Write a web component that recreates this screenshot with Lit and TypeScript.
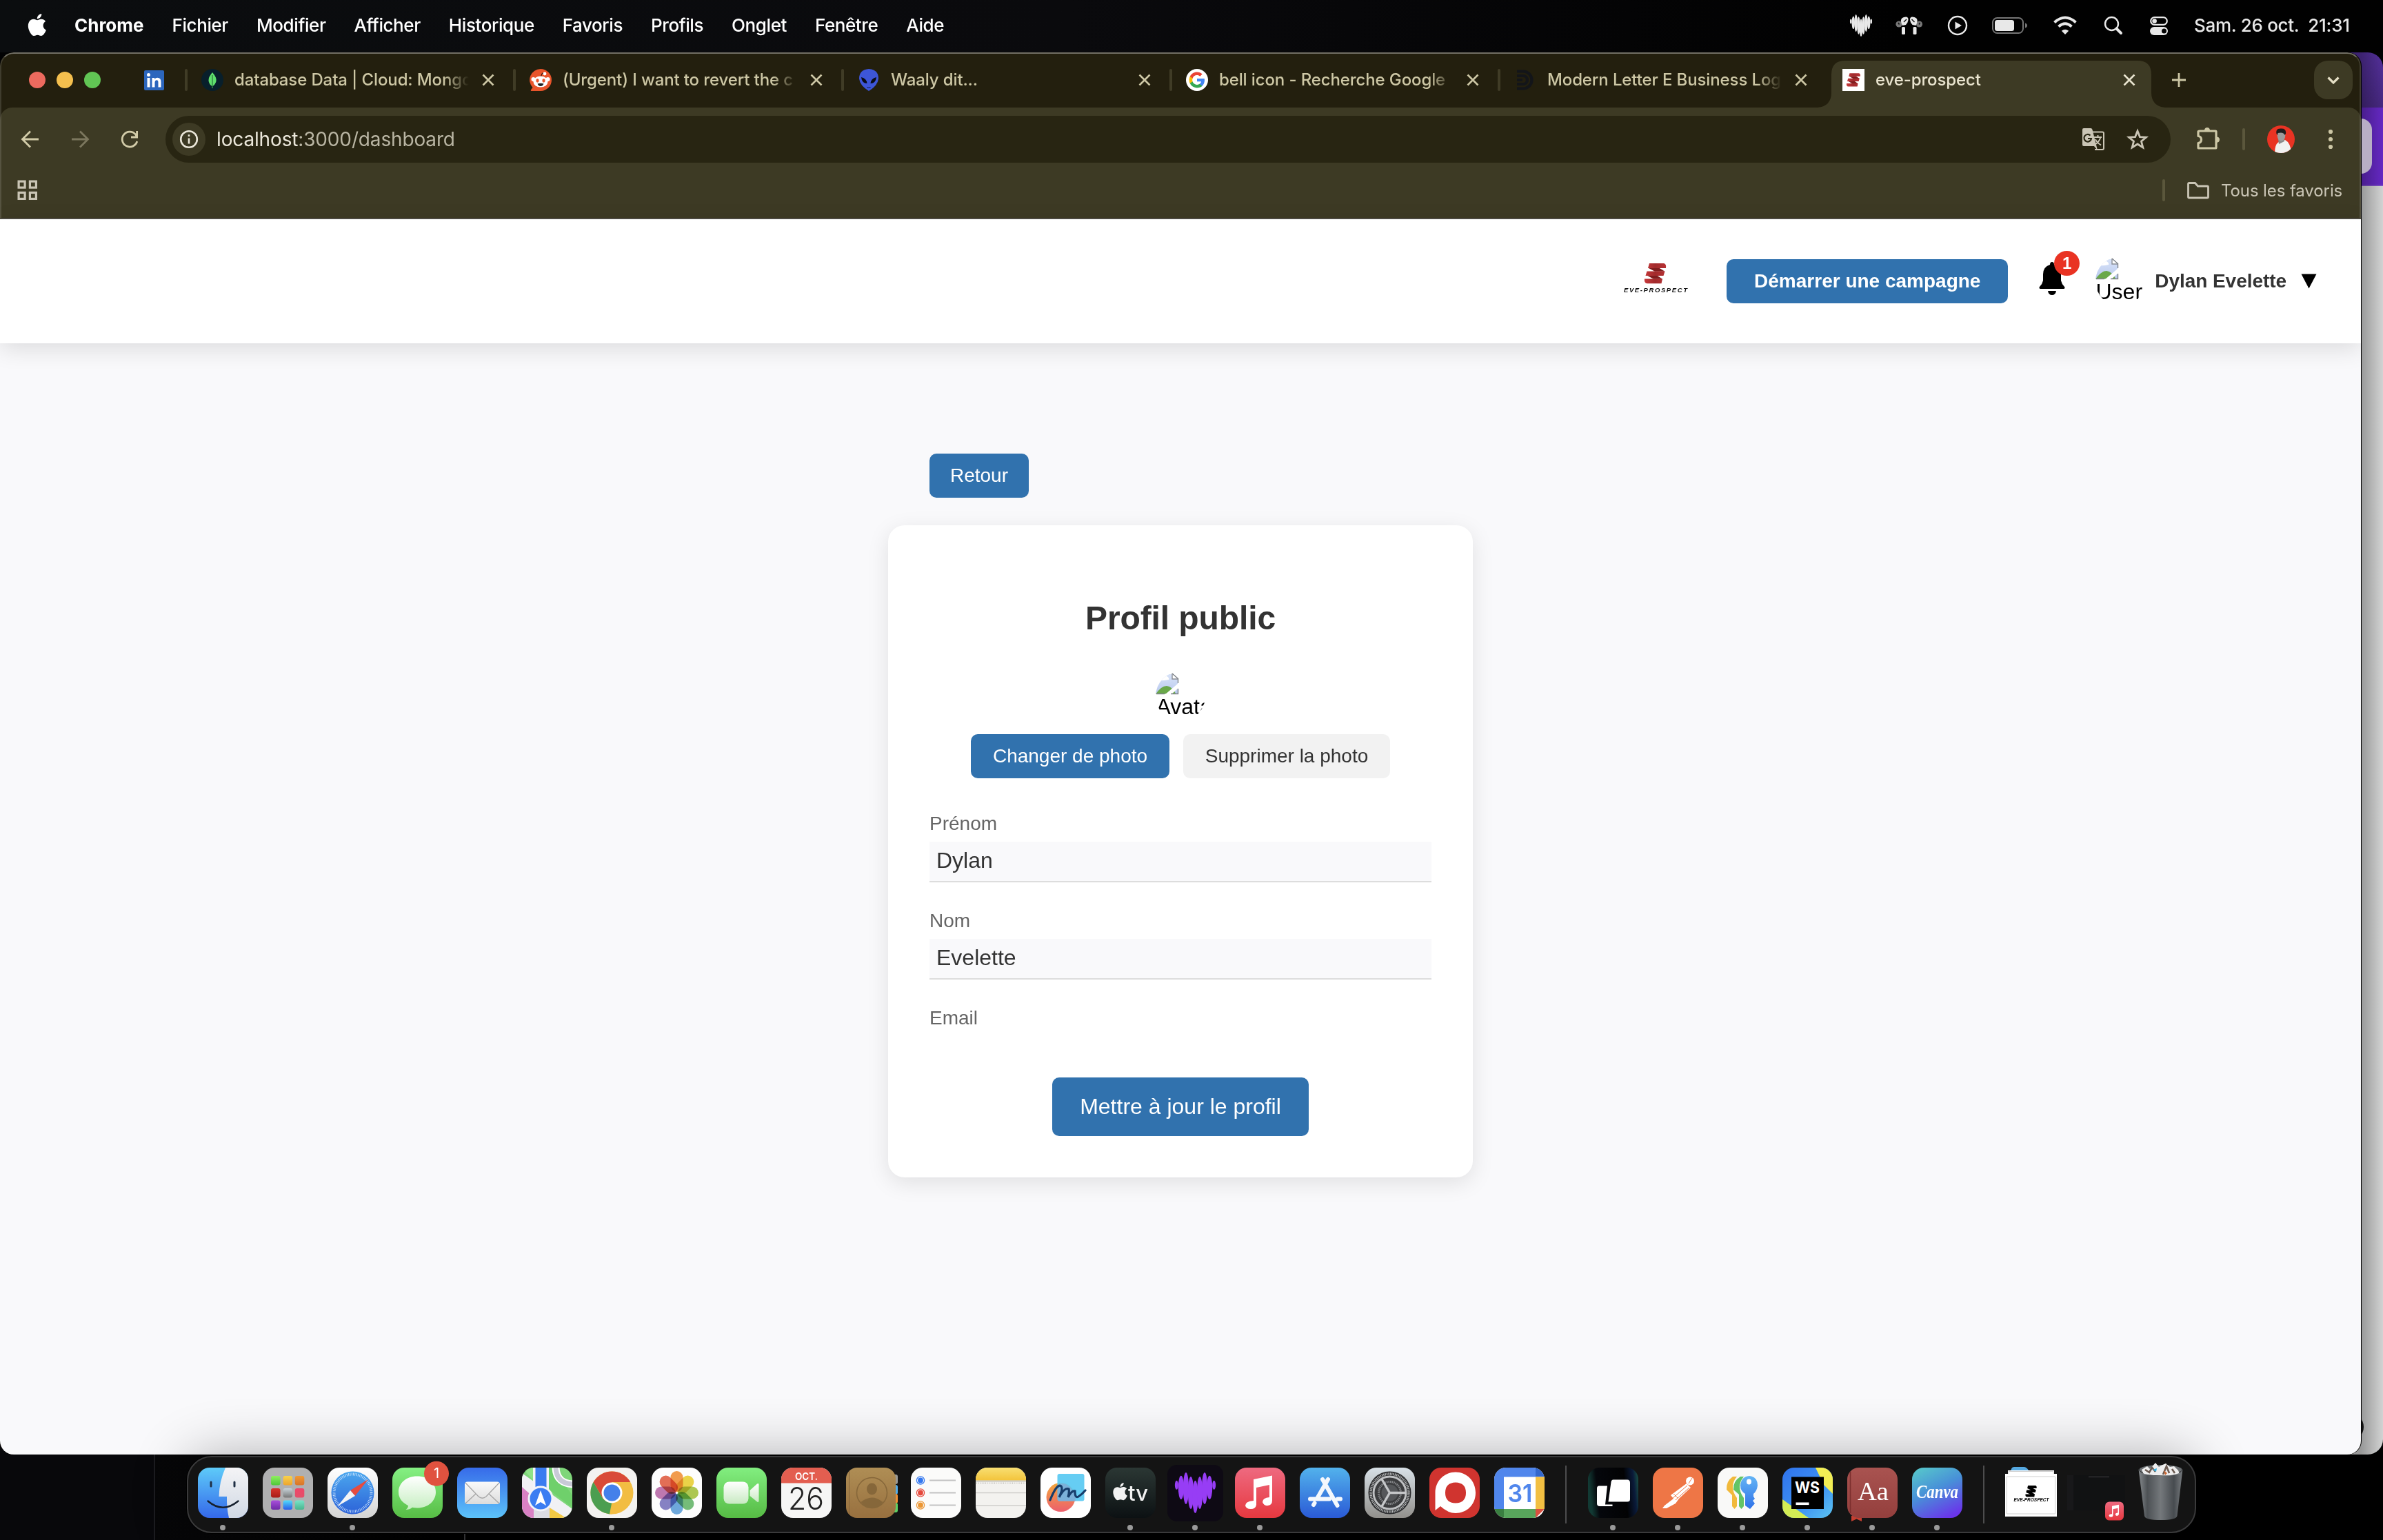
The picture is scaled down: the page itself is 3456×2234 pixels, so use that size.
import { LitElement, html, svg, css } from "lit";
import { customElement } from "lit/decorators.js";

/* ---------- shared drawings ---------- */

const APPLE =
  "M12.152 6.896c-.948 0-2.415-1.078-3.96-1.04-2.04.027-3.91 1.183-4.961 3.014-2.117 3.675-.546 9.103 1.519 12.09 1.013 1.454 2.208 3.09 3.792 3.039 1.52-.065 2.09-.987 3.935-.987 1.831 0 2.35.987 3.96.948 1.637-.026 2.676-1.48 3.676-2.948 1.156-1.688 1.636-3.325 1.662-3.415-.039-.013-3.182-1.221-3.22-4.857-.026-3.04 2.48-4.494 2.597-4.559-1.429-2.09-3.623-2.324-4.39-2.376-2-.156-3.675 1.09-4.61 1.09zM15.53 3.83c.843-1.012 1.4-2.427 1.245-3.83-1.207.052-2.662.805-3.532 1.818-.78.896-1.454 2.338-1.273 3.714 1.338.104 2.715-.688 3.559-1.701";

/* Sound-wave heart: vertical capsules [x, top, bottom] on a 100 unit grid */
const HEART_BARS: number[][] = [
  [4, 20, 42], [15, 8, 66], [27, 0, 78], [39, 10, 90], [50, 20, 100],
  [61, 10, 90], [73, 0, 78], [85, 8, 66], [96, 20, 42],
];
const heart = (w: number) =>
  HEART_BARS.map(([x, a, b]) => svg`<ellipse cx=${x} cy=${(a + b) / 2} rx=${x < 5 || x > 95 ? w * 0.6 : w} ry=${(b - a) / 2}></ellipse>`);

const ribbon = (id: string) => svg`
  <linearGradient id=${id} x1="0" x2="1"><stop offset="0" stop-color="#c8393b"/><stop offset=".5" stop-color="#a12a2c"/><stop offset="1" stop-color="#b83234"/></linearGradient>
  <path fill="#7f1d1e" d="M5 6.500H21L29.500 11.800H15ZM3.500 17.500H18L26 22.800H13Z"/>
  <path fill="url(#${id})" d="M7 0H28Q32 1 31 7H5ZM3.500 11.500H29.500L27.500 18H1.500ZM0 22.500H26L24.500 29.300H4Q-1 29 0 22.500Z"/>`;

const brokenImage = (label: string) => html`
  <svg width="72" height="72" viewBox="0 0 72 72" role="img">
    <defs>
      <clipPath id="round"><circle cx="36" cy="36" r="36"/></clipPath>
      <linearGradient id="sky" x1="0" y1="0" x2="0" y2="1"><stop offset="0" stop-color="#d8e3f8"/><stop offset="1" stop-color="#b9c9ee"/></linearGradient>
    </defs>
    <g clip-path="url(#round)">
      <g transform="translate(-1 1)">
        <path d="M1 3H25L33 11V31H1Z" fill="url(#sky)"/>
        <path d="M1 32Q9 20 17 20Q25 21 30 31Z" fill="#6aa84a"/>
        <path d="M12 3Q15 2 17 6Q21 8 20 11Q10 13 4 12V0H12Z" fill="#fff"/>
        <path d="M14 33L34 16V23L23 33Z" fill="#fff"/>
        <path d="M25 2V10H34" fill="#fff" stroke="#8b8f96" stroke-width="1.400"/>
        <path d="M25 2L34 10M33.500 9V16M33.500 24V31.500H23M2 31.500H14" fill="none" stroke="#7d8288" stroke-width="1.400"/>
      </g>
      <text x="0.500" y="62" font-family="'Liberation Sans',Arial,sans-serif" font-size="32" fill="#000">${label}</text>
    </g>
  </svg>`;

/* ---------- menu bar ---------- */

@customElement("menu-bar")
class MenuBar extends LitElement {
  static styles = css`
    :host { display: flex; align-items: center; padding: 0 36px 3px 36px; box-sizing: border-box; height: 76px;
      background: linear-gradient(90deg, #0b0d0f, #0a0a0d 45%, #010101 80%); color: #fff;
      font: 500 26px Inter, "Liberation Sans", sans-serif; }
    .logo { margin-right: 36px; flex: none; }
    .menus { display: flex; gap: 41px; letter-spacing: -0.42px; white-space: pre; }
    .app { font-weight: 700; letter-spacing: 0; }
    .status { display: flex; align-items: center; gap: 30px; margin-left: auto; color: #e8e8e8; }
    .status svg { flex: none; }
    .clock { margin-left: -3px; white-space: pre; letter-spacing: -0.3px; width: 238px; }
  `;
  render() {
    const items = ["Fichier", "Modifier", "Afficher", "Historique", "Favoris", "Profils", "Onglet", "Fenêtre", "Aide"];
    const bud = svg`<circle cx="5" cy="18" r="4.600" fill="#777"/><path d="M10 20Q5 10 12 8Q19 6 18.500 12Q18 16 15 19Z" fill="#e8e8e8"/><rect x="9" y="22" width="5" height="11" rx="1.500" fill="#e8e8e8"/><path d="M12 15L16 11" stroke="#111" stroke-width="1.500"/><path d="M4 16L5.500 18.500" stroke="#111" stroke-width="1.500"/>`;
    return html`
      <svg class="logo" width="36" height="34" viewBox="-1.4 0 27 25.5" fill="#fff"><path d=${APPLE}/></svg>
      <div class="menus"><span class="app">Chrome</span>${items.map((i) => html`<span>${i}</span>`)}</div>
      <div class="status">
        <svg width="40" height="34" viewBox="0 0 40 34" fill="#e8e8e8"><g transform="translate(4 1) scale(.32)">${heart(7)}</g></svg>
        <svg width="40" height="40" viewBox="0 0 40 40"><g>${bud}</g><g transform="matrix(-1 0 0 1 39.500 0)">${bud}</g></svg>
        <svg width="40" height="40" viewBox="0 0 40 40"><circle cx="20" cy="20" r="13" fill="none" stroke="#e8e8e8" stroke-width="2.400"/><path d="M16.500 14.500L26 20L16.500 25.500Z" fill="#e8e8e8"/></svg>
        <svg width="56" height="40" viewBox="0 0 56 40"><rect x="1" y="9" width="44" height="22" rx="6.500" fill="none" stroke="#757575" stroke-width="2"/><rect x="4" y="12" width="28" height="16" rx="3.500" fill="#e8e8e8"/><path d="M48 16.500Q51 17.500 51 20T48 23.500Z" fill="#757575"/></svg>
        <svg width="40" height="40" viewBox="0 0 40 40" fill="none" stroke="#e8e8e8" stroke-width="4"><path d="M4.500 15.500Q20 1.500 35.500 15.500"/><path d="M10.500 21.500Q20 13 29.500 21.500"/><path d="M20 33L14.800 27.800Q20 23.500 25.200 27.800Z" fill="#e8e8e8" stroke="none"/></svg>
        <svg width="40" height="40" viewBox="0 0 40 40" fill="none" stroke="#e8e8e8"><circle cx="17.500" cy="17.500" r="9.500" stroke-width="2.400"/><path d="M24.500 24.500L31 31" stroke-width="4" stroke-linecap="round"/></svg>
        <svg width="40" height="40" viewBox="0 0 40 40"><rect x="4.200" y="8.200" width="23.600" height="10.600" rx="5.300" fill="none" stroke="#e8e8e8" stroke-width="2.200"/><circle cx="9.600" cy="13.500" r="3.300" fill="#e8e8e8"/><rect x="3" y="22" width="26" height="12" rx="6" fill="#e8e8e8"/><circle cx="23.500" cy="28" r="3.500" fill="#050505"/></svg>
        <span class="clock">Sam. 26 oct.  21:31</span>
      </div>`;
  }
}

/* ---------- profile page ---------- */

@customElement("profile-page")
class ProfilePage extends LitElement {
  static styles = css`
    :host { display: flex; flex-direction: column; flex: 1; min-height: 0; background: #f9f9fb;
      font-family: "Liberation Sans", Arial, sans-serif; font-size: 28px; color: #333; }
    header { display: flex; align-items: center; justify-content: flex-end; height: 180px; flex: none; background: #fff;
      padding-right: 64px; box-shadow: 0 8px 32px rgba(0, 0, 0, 0.12); position: relative; box-sizing: border-box; }
    .brand { margin-right: 56px; }
    .btn { display: inline-flex; align-items: center; justify-content: center; height: 64px; border: 0; border-radius: 10px;
      background: #3172ae; color: #fff; font: inherit; padding: 0; box-sizing: border-box; white-space: nowrap; }
    .cta { width: 408px; font-weight: 700; }
    .bell { position: relative; width: 38px; height: 48px; margin: -8px 44px 0 45px; }
    .count { position: absolute; left: 22px; top: -16px; width: 37px; height: 36px; border-radius: 50%; background: #e93323;
      color: #fff; font: 700 24px/36px "Liberation Sans", Arial, sans-serif; text-align: center; }
    .name { font-weight: 700; margin: 0 20px 0 14px; letter-spacing: -0.05px; }
    header svg { display: block; flex: none; }
    main { display: flex; flex-direction: column; align-items: center; padding-top: 160px; }
    .back { width: 848px; padding-left: 60px; box-sizing: border-box; margin-bottom: 40px; display: flex; }
    .back .btn { width: 144px; }
    .card { width: 848px; height: 946px; box-sizing: border-box; padding: 107px 60px 60px; background: #fff; border-radius: 24px;
      box-shadow: 0 8px 32px rgba(0, 0, 0, 0.1); display: flex; flex-direction: column; align-items: center; }
    h2 { margin: 0 0 49px; font-size: 48px; line-height: 56px; font-weight: 700; letter-spacing: -0.1px; }
    .card > svg { display: block; flex: none; }
    .photo { display: flex; gap: 20px; margin: 19px 0 50px; }
    .change { width: 288px; }
    .remove { width: 300px; background: #f2f2f2; color: #333; }
    .field { align-self: stretch; display: flex; flex-direction: column; gap: 10px; margin-bottom: 40px; }
    .field:last-of-type { margin-bottom: 70px; }
    label { line-height: 32px; color: #666; }
    .input { height: 59px; box-sizing: border-box; border-bottom: 2px solid #ddd; background: #f9f9fb; padding: 0 10px;
      font-size: 32px; line-height: 55px; }
    .save { width: 372px; height: 85px; font-size: 32px; }
  `;
  render() {
    return html`
      <header>
        <svg class="brand" width="94" height="52" viewBox="0 0 94 52">
          <g transform="translate(31 0)">${ribbon("rib")}</g>
          <text x="1" y="42.300" font-family="'Liberation Sans',sans-serif" font-style="italic" font-weight="700" font-size="9.500" textLength="92" lengthAdjust="spacing" fill="#111">EVE-PROSPECT</text>
        </svg>
        <button class="btn cta">Démarrer une campagne</button>
        <div class="bell">
          <svg width="38" height="48" viewBox="0 0 38 48"><path d="M19 0Q22 0 22 4Q32 7 32 18V27Q33 32 37 36Q38.500 38.500 36 39H2Q-.5 38.500 1 36Q5 32 6 27V18Q6 7 16 4Q16 0 19 0ZM13 42H25Q24 48 19 48T13 42Z"/></svg>
          <span class="count">1</span>
        </div>
        ${brokenImage("User")}
        <span class="name">Dylan Evelette</span>
        <svg width="24" height="22" viewBox="0 0 24 22"><path d="M1.500 .5H23.500L12.500 21.500Z"/></svg>
      </header>
      <main>
        <div class="back"><button class="btn">Retour</button></div>
        <section class="card">
          <h2>Profil public</h2>
          ${brokenImage("Avatar")}
          <div class="photo"><button class="btn change">Changer de photo</button><button class="btn remove">Supprimer la photo</button></div>
          <div class="field"><label>Prénom</label><div class="input">Dylan</div></div>
          <div class="field"><label>Nom</label><div class="input">Evelette</div></div>
          <div class="field"><label>Email</label></div>
          <button class="btn save">Mettre à jour le profil</button>
        </section>
      </main>`;
  }
}

/* ---------- browser window ---------- */

const G_PATHS = svg`
  <path fill="#4285f4" d="M22.560 12.250c0-.78-.07-1.530-.2-2.250H12v4.260h5.920c-.26 1.370-1.040 2.530-2.210 3.310v2.770h3.570c2.080-1.920 3.280-4.740 3.280-8.090z"/>
  <path fill="#34a853" d="M12 23c2.970 0 5.460-.98 7.280-2.660l-3.570-2.770c-.98.66-2.230 1.060-3.710 1.060-2.860 0-5.290-1.930-6.160-4.530H2.180v2.840C3.990 20.530 7.700 23 12 23z"/>
  <path fill="#fbbc05" d="M5.840 14.090c-.22-.66-.35-1.360-.35-2.090s.13-1.430.35-2.090V7.070H2.180C1.430 8.550 1 10.220 1 12s.43 3.450 1.180 4.930l2.850-2.220.81-.62z"/>
  <path fill="#ea4335" d="M12 5.380c1.620 0 3.060.56 4.210 1.640l3.150-3.150C17.450 2.090 14.970 1 12 1 7.700 1 3.990 3.470 2.180 7.070l3.660 2.840c.87-2.600 3.300-4.530 6.160-4.530z"/>`;

const ICO = {
  mongo: svg`<circle cx="16" cy="16" r="16" fill="#081f2b"/><path d="M16 5Q23 13 21.500 18T16.500 25V28H15.500V25Q11 22 10.500 17T16 5Z" fill="#5fe06d"/><path d="M16 9V27" stroke="#0c3b26" stroke-width=".8"/>`,
  reddit: svg`<path d="M16 0A16 16 0 1 1 16 32H2Q1 31 4.500 27A16 16 0 0 1 16 0Z" fill="#e9552b"/><path d="M16 12L18.500 6L22 7" fill="none" stroke="#111" stroke-width="1"/><circle cx="22" cy="7" r="2.400" fill="#fff"/><circle cx="5.500" cy="15" r="3" fill="#fff"/><circle cx="26.500" cy="15" r="3" fill="#fff"/><ellipse cx="16" cy="18.500" rx="10.500" ry="8" fill="#fff"/><ellipse cx="11.500" cy="17" rx="2.100" ry="2.700" fill="#e9552b"/><ellipse cx="20.500" cy="17" rx="2.100" ry="2.700" fill="#e9552b"/><path d="M11.500 21.500Q16 20 20.500 21.500Q19 25 16 25T11.500 21.500Z" fill="#222"/>`,
  alien: svg`<path d="M16 0Q30 1 30 14Q29 24 16 32Q3 24 2 14Q2 1 16 0Z" fill="#3d56d8"/><path d="M5 12Q13 14 13.500 21Q6 21 5 12ZM27 12Q19 14 18.500 21Q26 21 27 12Z" fill="#0a0c18"/><path d="M13.500 26.500Q16 28 18.500 26.500" fill="none" stroke="#15205e" stroke-width="1.200"/>`,
  google: svg`<circle cx="16" cy="16" r="16" fill="#fff"/><g transform="translate(3.500 3.500) scale(1.040)">${G_PATHS}</g>`,
  letter: svg`<g fill="none" stroke="#131519" stroke-width="4.200"><path d="M4 3.500H13A12.500 12.500 0 0 1 13 28.500H4"/><path d="M4 10H13A6 6 0 0 1 13 22H4"/><path d="M4 16H12"/></g>`,
  eve: svg`<rect width="32" height="32" fill="#fff"/><g transform="translate(6 6.200) scale(.640 .660)">${ribbon("tabrib")}</g>`,
};

@customElement("browser-window")
class BrowserWindow extends LitElement {
  static styles = css`
    :host { display: flex; flex-direction: column; overflow: hidden; border-radius: 20px; box-sizing: border-box;
      background: #231f0e; color: #cdc7a5; font-family: Inter, "Liberation Sans", sans-serif; }
    .edge { position: absolute; inset: 0 0 auto 0; height: 242px; border-radius: 20px 20px 0 0; box-sizing: border-box;
      border: 2px solid rgba(255, 255, 255, 0.13); border-top-color: rgba(255, 255, 255, 0.36); border-bottom: 2px solid #4b4840; }
    .strip { display: flex; height: 80px; flex: none; align-items: center; }
    .lights { display: flex; gap: 16px; margin-left: 42px; }
    .light { width: 24px; height: 24px; border-radius: 50%; }
    .red { background: #ec6a5e; } .amber { background: #f4bf4e; } .green { background: #61c554; }
    .pin { margin: 0 30px 0 63px; }
    svg { display: block; flex: none; }
    .tab { width: 476px; height: 80px; flex: none; display: flex; align-items: center; position: relative; box-sizing: border-box; }
    .bar { width: 4px; height: 32px; border-radius: 2px; background: #403c26; margin-right: 20px; flex: none; }
    .title { margin-left: 16px; width: 356px; white-space: nowrap; font-size: 24px; font-weight: 450; line-height: 32px;
      letter-spacing: -0.12px; -webkit-mask-image: linear-gradient(90deg, #000 304px, transparent 340px); }
    .tab svg, .title { position: relative; }
    .active { color: #e9e4cf; }
    .active .bar { background: none; }
    .tab .shape { position: absolute; left: -12px; top: 12px; width: 504px; height: 68px; }
    .plus { margin-left: 16px; }
    .more { margin: 0 12px 0 auto; width: 56px; height: 56px; border-radius: 20px; background: #3d3a24; }
    .tools { display: flex; align-items: center; height: 92px; padding: 0 24px; background: #3d3a24; flex: none; border-radius: 18px 18px 0 0; gap: 32px; }
    .omni { flex: none; width: 2908px; height: 68px; border-radius: 34px; background: #282512; display: flex; align-items: center;
      padding: 0 28px 0 10px; box-sizing: border-box; font-size: 28px; margin-right: 2px; }
    .info { width: 48px; height: 48px; border-radius: 50%; background: #3d3a24; margin-right: 16px; flex: none; }
    .url { color: #b9b5a3; letter-spacing: -0.15px; margin-right: auto; font-weight: 430; }
    .host { color: #ebe7da; }
    .translate { margin-right: 24px; }
    .sep { width: 4px; height: 32px; border-radius: 2px; background: #5b573c; flex: none; margin: 0 0 0 -2px; }
    .marks { display: flex; align-items: center; height: 70px; padding: 0 30px 14px 20px; box-sizing: border-box; background: #3d3a24;
      font-size: 24px; color: #cac5b5; flex: none; }
    .marks .sep { margin: 0 32px 0 auto; }
    .label { margin-left: 17px; letter-spacing: -0.1px; width: 173px; white-space: nowrap; font-weight: 430; }
  `;
  tab(icon: unknown, title: string, active = false) {
    return html`<div class="tab ${active ? "active" : ""}">
      ${active
        ? html`<svg class="shape" viewBox="0 0 504 68"><path fill="#3d3a24" d="M0 68Q20 66 20 46V20Q20 0 40 0H464Q484 0 484 20V46Q484 66 504 68Z"/></svg>`
        : ""}
      <span class="bar"></span>
      <svg width="32" height="32" viewBox="0 0 32 32">${icon}</svg>
      <span class="title">${title}</span>
      <svg width="24" height="24" viewBox="0 0 24 24" stroke="currentColor" stroke-width="2.600"><path d="M4.500 4.500L19.500 19.500M19.500 4.500L4.500 19.500"/></svg>
    </div>`;
  }
  render() {
    return html`
      <div class="strip">
        <div class="lights"><i class="light red"></i><i class="light amber"></i><i class="light green"></i></div>
        <svg class="pin" width="29" height="29" viewBox="0 0 29 29"><rect width="29" height="29" rx="2" fill="#2c66bd"/><g fill="#fff"><rect x="4.500" y="11" width="4" height="13.500"/><circle cx="6.500" cy="6.500" r="2.500"/><path d="M11.500 11H15.300V13Q16.500 10.700 19.300 10.700Q24.500 10.700 24.500 17V24.500H20.500V17.500Q20.500 14.200 18.200 14.200T15.500 17.500V24.500H11.500Z"/></g></svg>
        ${this.tab(ICO.mongo, "database Data | Cloud: Mongo")}
        ${this.tab(ICO.reddit, "(Urgent) I want to revert the c")}
        ${this.tab(ICO.alien, "Waaly dit...")}
        ${this.tab(ICO.google, "bell icon - Recherche Google")}
        ${this.tab(ICO.letter, "Modern Letter E Business Log")}
        ${this.tab(ICO.eve, "eve-prospect", true)}
        <svg class="plus" width="40" height="40" viewBox="0 0 40 40" stroke="#cdc7a5" stroke-width="2.800"><path d="M20 10V30M10 20H30"/></svg>
        <svg class="more" viewBox="0 0 56 56" fill="none" stroke="#e6e0c6" stroke-width="3.200"><path d="M20.500 24.500L28 32L35.500 24.500"/></svg>
      </div>
      <div class="tools">
        <svg width="40" height="40" viewBox="0 0 40 40" fill="none" stroke="#d2cba8" stroke-width="2.800"><path d="M32 20H9M20 8.500L8.500 20L20 31.500"/></svg>
        <svg width="40" height="40" viewBox="0 0 40 40" fill="none" stroke="#7c775e" stroke-width="2.800"><path d="M8 20H31M20 8.500L31.500 20L20 31.500"/></svg>
        <svg width="40" height="40" viewBox="0 0 40 40" fill="none" stroke="#d2cba8" stroke-width="2.800"><path d="M30.800 23A11 11 0 1 1 28.500 12.800L30 15.500M30.600 8V17H22"/></svg>
        <div class="omni">
          <svg class="info" viewBox="0 0 48 48" fill="none" stroke="#ebe7da" stroke-width="2.600"><circle cx="24" cy="24" r="11.800"/><path d="M24 22.500V30.500M24 17.300V20"/></svg>
          <span class="url"><span class="host">localhost</span>:3000/dashboard</span>
          <svg class="translate" width="40" height="40" viewBox="0 0 40 40"><path d="M6 4H16Q18 4 18.500 6L26 36L21 30H6Q4 30 4 28V6Q4 4 6 4Z" fill="#cac5b5"/><path d="M19 9.500H33Q35 9.500 35 11.500V33Q35 35 33 35H22" fill="none" stroke="#cac5b5" stroke-width="2"/><path d="M15.500 14.500A5.300 5.300 0 1 0 17 19H12" fill="none" stroke="#282512" stroke-width="2.200"/><path d="M21 17H32M26.500 14V17M30.500 17Q28 25 21.500 28M23 20Q25 25 31 28.500" fill="none" stroke="#cac5b5" stroke-width="1.900"/></svg>
          <svg width="40" height="40" viewBox="0 0 40 40" fill="none" stroke="#cac5b5" stroke-width="2.800"><path d="M20 8L23.400 16.600L32.500 17.200L25.500 23L27.800 32L20 27L12.200 32L14.500 23L7.500 17.200L16.600 16.600Z"/></svg>
        </div>
        <svg width="40" height="40" viewBox="0 0 40 40"><path d="M8 8H31Q32 8 32 9V32Q32 33 31 33H7Q6 33 6 32V25.500Q10.500 25 10.500 20.500T6 15.500V9Q6 8 8 8Z" fill="none" stroke="#cdc7a5" stroke-width="3.200" stroke-linejoin="round"/><path d="M15 7Q15 2.500 19 2.500T23 7ZM32.500 16Q37 16 37 20T32.500 24.500Z" fill="#cdc7a5" transform="translate(0 .5)"/></svg>
        <span class="sep"></span>
        <svg width="40" height="40" viewBox="0 0 40 40"><clipPath id="av"><circle cx="20" cy="20" r="20"/></clipPath><g clip-path="url(#av)"><rect width="40" height="40" fill="#e93323"/><path d="M11 40Q11 27 17 24L26 21Q34 25 35 40Z" fill="#f1f1f1"/><path d="M16 20L17 27L25 23V18Z" fill="#8a8a8a"/><ellipse cx="20.500" cy="14.500" rx="5.800" ry="8" fill="#9b9b9b"/><path d="M13.500 12Q12 4 20 4.500Q28 4 27 12L25.500 14Q24 9 15.500 11L15 14Z" fill="#1d1d1d"/></g></svg>
        <svg width="40" height="40" viewBox="0 0 40 40" fill="#cdc7a5"><circle cx="20" cy="9" r="3.100"/><circle cx="20" cy="20" r="3.100"/><circle cx="20" cy="31" r="3.100"/></svg>
      </div>
      <div class="marks">
        <svg width="40" height="40" viewBox="0 0 40 40" fill="none" stroke="#cac5b5" stroke-width="3.200"><rect x="7.100" y="7.100" width="9" height="9"/><rect x="23.400" y="7.100" width="9" height="9"/><rect x="7.100" y="23.400" width="9" height="9"/><rect x="23.400" y="23.400" width="9" height="9"/></svg>
        <span class="sep"></span>
        <svg width="32" height="32" viewBox="0 0 32 32" fill="none" stroke="#cac5b5" stroke-width="2.800"><path d="M3 5.500H11.500L15.500 10H29Q30.500 10 30.500 11.500V25.500Q30.500 27 29 27H3Q1.500 27 1.500 25.500V7Q1.500 5.500 3 5.500Z"/></svg>
        <span class="label">Tous les favoris</span>
      </div>
      <profile-page></profile-page>
      <div class="edge"></div>`;
  }
}

/* ---------- dock ---------- */

const grad = (id: string, a: string, b: string) =>
  svg`<linearGradient id=${id} x1="0" y1="0" x2="0" y2="1"><stop offset="0" stop-color=${a}/><stop offset="1" stop-color=${b}/></linearGradient>`;
const tile = (fill: string) => svg`<rect width="73" height="73" rx="17" fill=${fill}/>`;
const clipTile = svg`<clipPath id="sq"><rect width="73" height="73" rx="17"/></clipPath>`;
const around = (n: number) => Array.from({ length: n }, (_, i) => (i * 360) / n);

const PETALS = ["#f0913a", "#e8cf35", "#a5c23f", "#67b56b", "#5f9fd8", "#7a74bd", "#b86aa8", "#e05f45"];
const PADS: [number, number, string, string][] = [
  [12, 12, "#8fef60", "#4fc83a"], [29.6, 12, "#f8d24c", "#eda52e"], [46.8, 12, "#f09a35", "#d97429"],
  [12, 30, "#d8342c", "#a61d18"], [29.6, 30, "#c8d4da", "#777"], [46.8, 30, "#ef4668", "#e2506a"],
  [12, 47.5, "#a94fdb", "#6e2ba6"], [29.6, 47.5, "#52dcfb", "#2a5de8"], [46.8, 47.5, "#79e3c9", "#48b58d"],
];
const note = svg`<path fill="#fff" d="M27 17L54 11.500V48Q54 54 48 55T40 50Q40 44 50 43V25L31 29V54Q30 60 23 60T15 55Q15 49 27 48Z"/>`;

const ICONS: Record<string, unknown> = {
  finder: svg`${grad("fi", "#5ecbf9", "#3468ea")}${grad("fw", "#f4f4f6", "#d0d8e4")}${tile("url(#fi)")}
    <path clip-path="url(#sq)" fill="url(#fw)" d="M40 0Q31 20 30.500 42H42Q41.500 58 45 73H73V0Z"/>
    <path d="M19 21V27M53 21V27" stroke="#1f2f45" stroke-width="3" stroke-linecap="round"/><path d="M14.500 48.500Q36 67 58.500 48.500" fill="none" stroke="#16202e" stroke-width="2.400" stroke-linecap="round"/>`,
  launchpad: svg`${tile("#b0b0b1")}${PADS.map(([x, y, a, b], i) => svg`${grad("lp" + i, a, b)}<rect x=${x} y=${y} width="13.500" height="13.500" rx="3" fill="url(#lp${i})"/>`)}`,
  safari: svg`${grad("sa", "#fff", "#d4d4d4")}${grad("sb", "#4ba7ee", "#2c62d8")}${tile("url(#sa)")}<circle cx="36.500" cy="36.500" r="31" fill="url(#sb)"/>
    <circle cx="36.500" cy="36.500" r="27" fill="none" stroke="#d9ecff" stroke-width="4" stroke-dasharray=".8 1.560"/>
    <path d="M59 17L40 41L33 33Z" fill="#e64b3f"/><path d="M14.500 56L33 33L40 41Z" fill="#f3f4f6"/>`,
  messages: svg`${grad("ms", "#85f083", "#57bd45")}${grad("mb", "#fff", "#c5eec0")}${tile("url(#ms)")}<path d="M36 12.500C52 12.500 63 22.500 63 35.500S52 58.500 36 58.500Q32 58.500 29 57.700Q25 61 19.500 61Q23.500 58 22.800 55Q9 48 9 35.500C9 22.500 20 12.500 36 12.500Z" fill="url(#mb)"/>
    <circle cx="64" cy="8.700" r="18" fill="#e0523f"/><text x="64" y="15" text-anchor="middle" fill="#fff" font-size="20" font-family="Inter,sans-serif">1</text>`,
  mail: svg`${grad("ma", "#376be9", "#5cc3fa")}${grad("me", "#fafafa", "#dcdcdc")}${tile("url(#ma)")}<rect x="11" y="20.500" width="51" height="32.500" rx="4" fill="url(#me)"/><path d="M12 22L31 42Q36.500 46.500 42 42L61 22M12 52L27 38M61 52L46 38" fill="none" stroke="#a5a5a5" stroke-width="1.300"/>`,
  maps: svg`<g clip-path="url(#sq)"><rect width="73" height="73" fill="#7fd67a"/><path d="M0 0H16V18Z" fill="#8fe388"/><path d="M0 8L73 60V73H0Z" fill="#f1f1f4"/><path d="M0 28L17 43V73H0Z" fill="#d981c4"/><path d="M17 50H40V73H17Z" fill="#dcdce2"/><path d="M40 58L64 73H40Z" fill="#f3c944"/><path d="M34 0H44L73 40V58L34 28Z" fill="#6fd06b"/><rect x="16" width="23" height="34" fill="#f4f4f7"/><rect x="19.500" width="16" height="40" fill="#3a7bf0"/><path d="M49 0Q50 24 76 24" fill="none" stroke="#fff" stroke-width="11"/><path d="M49 0Q50 24 76 24" fill="none" stroke="#c9cad6" stroke-width="7"/></g><circle cx="27" cy="45" r="17" fill="#3b7df2" stroke="#f2f3f7" stroke-width="3"/><path d="M27 33L35 55L27 50L19 55Z" fill="#fff"/>`,
  chrome: svg`${tile("#f3f2f0")}<circle cx="36.500" cy="36.500" r="31" fill="#f2bd42"/><path d="M9.600 21A31 31 0 0 1 63.300 21H36.500L23 44Z" fill="#d94a38"/><path d="M9.600 21L23 44.300Q29 52 40 51.500L33 67.400A31 31 0 0 1 9.600 21Z" fill="#4c9e50"/><path d="M50 44L36.500 67.500H33L36 52Z" fill="#f2bd42"/><circle cx="36.500" cy="36.500" r="15" fill="#fff"/><circle cx="36.500" cy="36.500" r="12" fill="#4480ea"/>`,
  photos: svg`${tile("#fdfdfd")}<g opacity=".9">${around(8).map((a, i) => svg`<rect x="27.500" y="5" width="18" height="30" rx="9" fill=${PETALS[i]} class="petal" transform="rotate(${a} 36.500 36.500)"/>`)}</g>`,
  facetime: svg`${grad("ft", "#82ee80", "#56bb44")}${grad("fc", "#fff", "#c8eac2")}${tile("url(#ft)")}<rect x="10.500" y="20.500" width="36" height="32" rx="8" fill="url(#fc)"/><path d="M48.500 33L59 23.500Q61.500 22 61.500 25V48Q61.500 51 59 49.500L48.500 41Z" fill="url(#fc)"/>`,
  calendar: svg`${tile("#f6f6f5")}<path clip-path="url(#sq)" d="M0 0H73V22.500H0Z" fill="#e35e50"/><text x="36.500" y="17.500" text-anchor="middle" font-size="15" font-weight="600" fill="#fff" font-family="Inter,sans-serif" textLength="33" lengthAdjust="spacingAndGlyphs">OCT.</text><text x="36" y="61" text-anchor="middle" font-size="45" font-weight="300" fill="#222" font-family="Inter,sans-serif" textLength="52" lengthAdjust="spacingAndGlyphs">26</text>`,
  contacts: svg`<rect x="60" y="10" width="15" height="14" rx="3" fill="#9a9a96"/><rect x="60" y="25" width="15" height="14" rx="3" fill="#55aee8"/><rect x="60" y="38" width="15" height="14" rx="3" fill="#f09035"/><rect x="60" y="51" width="15" height="14" rx="3" fill="#5fd064"/>${grad("co", "#af8e55", "#98703f")}<rect width="72" height="73" rx="16" fill="url(#co)"/><path d="M4.500 5V68" stroke="#86653a" stroke-width="1"/><g fill="none" stroke="#86673a" stroke-width="1.600"><circle cx="37.500" cy="36.500" r="22"/></g><ellipse cx="37.500" cy="31" rx="7.500" ry="8.500" fill="#86673a"/><path d="M21.500 50Q37.500 37 53.500 50Q47 58.500 37.500 58.500T21.500 50Z" fill="#86673a"/>`,
  reminders: svg`${tile("#fbfbfa")}${([["#3478f0", 18.5], ["#e5493c", 36.5], ["#eb9634", 54.5]] as [string, number][]).map(([c, y]) => svg`<circle cx="14" cy=${y} r="5.600" fill="none" stroke=${c} stroke-width="1.200"/><circle cx="14" cy=${y} r="3.900" fill=${c}/><path d="M27 ${y}H65" stroke="#c3c3c3" stroke-width="1.800"/>`)}`,
  notes: svg`${grad("no", "#f8df72", "#f3c43c")}${tile("#f3f2ef")}<path clip-path="url(#sq)" d="M0 0H73V18.500H0Z" fill="url(#no)"/><path d="M0 19.500H73" stroke="#b8b5ab" stroke-width="1.400"/><path d="M1 22.500H72" stroke="#c3c1ba" stroke-width="2" stroke-dasharray="1 1.600"/><path d="M0 36.500H73M0 55H73" stroke="#cfcecb" stroke-width="1.300"/>`,
  freeform: svg`${tile("#fff")}${grad("ff", "#f3a83d", "#ec5f6c")}<circle cx="29.500" cy="43" r="21" fill="url(#ff)"/><rect x="24.500" y="9" width="39" height="39.500" rx="3" fill="#55c8f2" opacity=".9"/><path d="M25 25Q40 17 51 42V48.500H27.500Q24.500 48 24.500 45Z" fill="#86a9d6" opacity=".7"/><path d="M14 47Q24 22 30 27Q33 31 27 43Q35 28 41 31Q42 35 40 43Q45 33 50 34Q50 45 55 42T65 33" fill="none" stroke="#173d6b" stroke-width="3.200" stroke-linecap="round"/>`,
  tv: svg`${grad("tv", "#2b3734", "#0c1113")}${tile("url(#tv)")}<g transform="translate(9 22) scale(1.050)"><path d=${APPLE} fill="#f2f2f2"/></g><text x="33" y="47.500" font-size="31" fill="#f2f2f2" font-weight="500" font-family="Inter,sans-serif" textLength="29" lengthAdjust="spacingAndGlyphs">tv</text>`,
  heart: svg`<rect x="-4" y="-4" width="81" height="82" rx="14" fill="#0e0a14"/><g transform="translate(7 7) scale(.590)" fill="#973df5">${heart(7)}</g>`,
  music: svg`${grad("mu", "#ee6a80", "#e6383f")}${tile("url(#mu)")}${note}`,
  appstore: svg`${grad("as", "#52b2ec", "#2a5ad6")}${tile("url(#as)")}<g stroke="#f4f8fd" stroke-width="6" stroke-linecap="round"><path d="M41 17L25 45M33 17L54.500 55M15 45.500H43M55 45.500H59M20 54L21.500 51.500"/></g>`,
  settings: svg`${grad("se", "#d8e1e7", "#92908c")}${tile("url(#se)")}<circle cx="36.500" cy="36.500" r="31" fill="#2d2e30"/><circle cx="36.500" cy="36.500" r="27.500" fill="none" stroke="#b5b7b8" stroke-width="3.500" stroke-dasharray="1.300 1.100"/><circle cx="36.500" cy="36.500" r="23.500" fill="#3c3d3f" stroke="#bfc1c3" stroke-width="3"/><circle cx="36.500" cy="36.500" r="16" fill="none" stroke="#85878a" stroke-width="3" stroke-dasharray="1.600 1"/><circle cx="36.500" cy="36.500" r="12" fill="#55575a"/><path d="M36.500 36.500H60M36.500 36.500L24.800 16.500M36.500 36.500L24.800 56.500" stroke="#c5c7c9" stroke-width="3.400"/>`,
  pocket: svg`${tile("#d0342f")}<path fill="#fff" fill-rule="evenodd" d="M38 6.500C54 6.500 67 19 67 36.500S54 66 38 66Q27 66 16 56L8.500 62V36.500C8.500 19 22 6.500 38 6.500ZM38 21.500Q23 22 23 36.500T38 51.500Q53 51 53 36.500T38 21.500Z"/>`,
  gcal: svg`<g clip-path="url(#sq)"><rect width="73" height="73" fill="#fff"/><path d="M0 0H60V13.500H14V60H0Z" fill="#5086ec"/><path d="M60 0H73V13.500H60Z" fill="#3267cd"/><path d="M60 13.500H73V60H60Z" fill="#f2bf42"/><path d="M0 60H14V73H0Z" fill="#3a7f41"/><path d="M14 60H60V73H14Z" fill="#58a55c"/><path d="M60 60H73L60 73Z" fill="#d95040"/></g><text x="37.500" y="50" text-anchor="middle" font-size="36" font-weight="600" fill="#5086ec" font-family="Inter,sans-serif" textLength="36" lengthAdjust="spacingAndGlyphs">31</text>`,
  cards: svg`<linearGradient id="cd" x1="0" x2="1" y1=".1" y2="0"><stop offset="0" stop-color="#123a34"/><stop offset=".15" stop-color="#05070c"/><stop offset=".7" stop-color="#020203"/><stop offset=".88" stop-color="#0a1a3a"/><stop offset="1" stop-color="#1c5a45"/></linearGradient>${tile("url(#cd)")}<path d="M16 26.500H28L25 53.500H35.500V56H17Q13 56 13 52V30Q13 26.500 16 26.500Z" fill="#fff"/><path d="M36.500 17.500H57Q61 17.500 61 22V46Q61 49.500 57 49.500H29.500L33.500 21Q34 17.500 36.500 17.500Z" fill="#fff"/>`,
  postman: svg`${tile("#ee7646")}<circle cx="54" cy="19.500" r="6" fill="#fff"/><path d="M49 23L55 29L38 45L33 52L20 59L14 59L17 55L30 45L26 40Z" fill="#fff"/><path d="M50 26L28 45M53 29L33 47M57 15L52 23M30 38L36 44" stroke="#ee7646" stroke-width="1"/>`,
  keys: svg`${tile("#f9f9f8")}<path d="M22 13Q12 20 13 32L21 40V56L24.500 60L28 56V44Q22 36 22 28T28 13Z" fill="#f1b93c"/><path d="M33 13Q22 20 23 32L31 39V56L34.500 60L38 56V44Q32 36 32 28T38 13Z" fill="#63c466"/>${grad("ky", "#64b5f5", "#2f72e8")}<path d="M46 12Q58 13 58 26Q57 34 52 38V42L54 45L51 48L54 52L47 60L40 55V38Q33 34 33 26Q34 13 46 12Z" fill="url(#ky)"/><ellipse cx="45.500" cy="20.500" rx="3.500" ry="4" fill="#fff"/>`,
  ws: svg`<linearGradient id="ws" x1="0" y1="0" x2="1" y2="1"><stop offset="0" stop-color="#2f73ee"/><stop offset=".6" stop-color="#3f93f3"/><stop offset="1" stop-color="#5cc4f2"/></linearGradient>${tile("url(#ws)")}<g clip-path="url(#sq)"><path d="M48 0H73V38L60 25Z" fill="#f3ee54"/><path d="M0 46L14 56L38 73H0Z" fill="#d3ec55"/></g><rect x="13" y="13.500" width="47" height="46.500" fill="#000"/><text x="18" y="36.500" font-size="23" font-weight="700" fill="#fff" font-family="Inter,sans-serif" textLength="36" lengthAdjust="spacingAndGlyphs">WS</text><rect x="19.500" y="50.500" width="19" height="3.600" fill="#fff"/>`,
  dict: svg`<path d="M6 70H21V78L13.500 74.500L6 78Z" fill="#c53f31"/>${grad("di", "#a95350", "#943f3d")}${tile("url(#di)")}<path d="M4.500 6V66" stroke="#7c2f2e" stroke-width="1.600"/><text x="37.500" y="47" text-anchor="middle" font-size="37" fill="#fff" font-family="'Liberation Serif',serif" textLength="45" lengthAdjust="spacingAndGlyphs">Aa</text>`,
  canva: svg`<linearGradient id="ca" x1=".2" y1="0" x2=".7" y2="1"><stop offset="0" stop-color="#55c3cc"/><stop offset=".45" stop-color="#4890d8"/><stop offset="1" stop-color="#6a35ea"/></linearGradient>${tile("url(#ca)")}<text x="36.500" y="44" text-anchor="middle" font-size="27" font-style="italic" font-weight="700" fill="#fff" font-family="'Liberation Serif',serif" textLength="61" lengthAdjust="spacingAndGlyphs">Canva</text>`,
  folder: svg`<path d="M7 8Q7-1 12-1H26Q30-1 33 4H40V12H7Z" fill="#55a8e0"/><rect x="3" y="4" width="67" height="12" fill="#fff"/><rect x="-1" y="9" width="75" height="62" fill="#fff"/><path d="M1.500 13H71.500V67H1.500ZM4 9V5.500H69V9" fill="none" stroke="#cfcfcf" stroke-width="1"/><g transform="translate(28.500 26) scale(.52 .56)"><path fill="#000" d="M7 0H28Q32 1 31 7L21 7L29.500 11.500L27.500 18H18L26 22.500L24.500 29.300H4Q-1 29 0 22.500H13L1.500 18L3.500 11.500H15L5 7Z"/></g><text x="11.500" y="49" font-size="8" font-style="italic" font-weight="700" fill="#000" font-family="'Liberation Sans',sans-serif" textLength="51" lengthAdjust="spacingAndGlyphs">EVE-PROSPECT</text>`,
  mini: svg`${grad("mi", "#ee6a80", "#e6383f")}<rect x="-5" y="11" width="84" height="51" fill="#111213"/><rect x="-5" y="11" width="9" height="51" fill="#18181a"/><rect x="26" y="12" width="30" height="2.500" fill="#232325"/><g transform="translate(50 49.500) scale(.370)">${tile("url(#mi)")}${note}</g>`,
  trash: svg`<linearGradient id="tr" x1="0" x2="1"><stop offset="0" stop-color="#9ba0a4"/><stop offset=".2" stop-color="#575c60"/><stop offset=".5" stop-color="#858a8e"/><stop offset=".8" stop-color="#50555a"/><stop offset="1" stop-color="#8b9094"/></linearGradient><ellipse cx="36.500" cy="3" rx="31" ry="7" fill="#6a6e71"/><path d="M9 3L17-2L21 2L29-7L34-1L37-3L44-6L50-1L56-2L62 4L64 9L50 12L26 11L12 10Z" fill="#eee"/><path d="M14 3L20 7L24 0L29 6M40 10L45-2L49 8M53 2L57 8" stroke="#6b5b52" stroke-width="2.600" fill="none"/><path d="M25 3L31 1L30 6Z" fill="#39b1e0"/><path d="M41 4L46 8L43 11Z" fill="#cf6a35"/><path d="M4.500 2Q6 11 36 11.500T68.500 2L60.500 70Q59 76 36.500 76T13 70Z" fill="url(#tr)" opacity=".85"/>`,
};

type Slot = [string, boolean] | null;
const DOCK: Slot[] = [
  ["finder", true], ["launchpad", false], ["safari", true], ["messages", false], ["mail", false], ["maps", false], ["chrome", true],
  ["photos", false], ["facetime", false], ["calendar", false], ["contacts", false], ["reminders", false], ["notes", false],
  ["freeform", false], ["tv", true], ["heart", true], ["music", true], ["appstore", false], ["settings", false], ["pocket", false],
  ["gcal", false], null, ["cards", true], ["postman", true], ["keys", true], ["ws", true], ["dict", true], ["canva", true], null,
  ["folder", false], ["mini", false], ["trash", false],
];

@customElement("app-dock")
class AppDock extends LitElement {
  static styles = css`
    :host { display: flex; align-items: stretch; box-sizing: border-box; border: 2px solid #3a3a3b; border-radius: 36px;
      background: #141414; padding: 0 3px; box-shadow: 0 0 0 1px #000, 0 0 80px rgba(0, 0, 0, 0.31); }
    .slot { width: 94px; display: flex; flex-direction: column; align-items: center; padding-top: 14.5px; box-sizing: border-box; flex: none; }
    .slot svg { display: block; overflow: visible; }
    .dot { width: 8px; height: 8px; border-radius: 50%; background: #9a9a9a; margin-top: 10.5px; }
    .rule { width: 42px; display: flex; justify-content: center; align-items: flex-start; padding-top: 12px; flex: none; }
    .rule::before { content: ""; width: 2px; height: 84px; background: #4d4d4e; }
    .petal { mix-blend-mode: multiply; }
  `;
  render() {
    return DOCK.map((s) =>
      s === null
        ? html`<div class="rule"></div>`
        : html`<div class="slot"><svg width="73" height="73" viewBox="0 0 73 73">${clipTile}${ICONS[s[0]]}</svg>${s[1] ? html`<i class="dot"></i>` : ""}</div>`,
    );
  }
}

/* ---------- desktop ---------- */

@customElement("app-root")
class AppRoot extends LitElement {
  static styles = css`
    :host { display: block; position: relative; width: 3456px; height: 2234px; overflow: hidden; background: #020203; }
    .wall { position: absolute; inset: 2100px 0 0 0; background:
      linear-gradient(90deg, #08080b 0 223px, #1c1c20 223px 225px, transparent 225px),
      linear-gradient(90deg, #0a0a0c, #000 700px); }
    .line { position: absolute; left: 673px; top: 2224px; width: 2px; height: 10px; background: #3a3a3c; }
    .behind { position: absolute; left: 2800px; top: 76px; width: 656px; height: 2034px; border-radius: 22px; overflow: hidden;
      background: linear-gradient(90deg, rgba(0,0,0,.28) 624px, rgba(0,0,0,0) 656px), linear-gradient(#54309c, #46287f 80px, #6428c2 80px, #6428c2 192px, #7a4bc6 192px, #7a4bc6 194px, #d2d3d3 194px); }
    .pill { position: absolute; right: 16px; top: 96px; width: 100px; height: 80px; border-radius: 16px; background: #b8aec5; }
    .knob { position: absolute; right: 28px; top: 1974px; width: 40px; height: 40px; border-radius: 50%; background: #111; }
    browser-window { position: absolute; left: 0; top: 76px; width: 3424px; height: 2034px; }
    .shadow { position: absolute; left: 0; top: 76px; width: 3425px; height: 2034px; border-radius: 20px; background: #000; }
    app-dock { position: absolute; left: 271px; top: 2112px; width: 2914px; height: 112px; }
  `;
  render() {
    return html`
      <menu-bar></menu-bar>
      <div class="wall"></div><div class="line"></div>
      <div class="behind"><div class="pill"></div><div class="knob"></div></div>
      <div class="shadow"></div>
      <browser-window></browser-window>
      <app-dock></app-dock>`;
  }
}
